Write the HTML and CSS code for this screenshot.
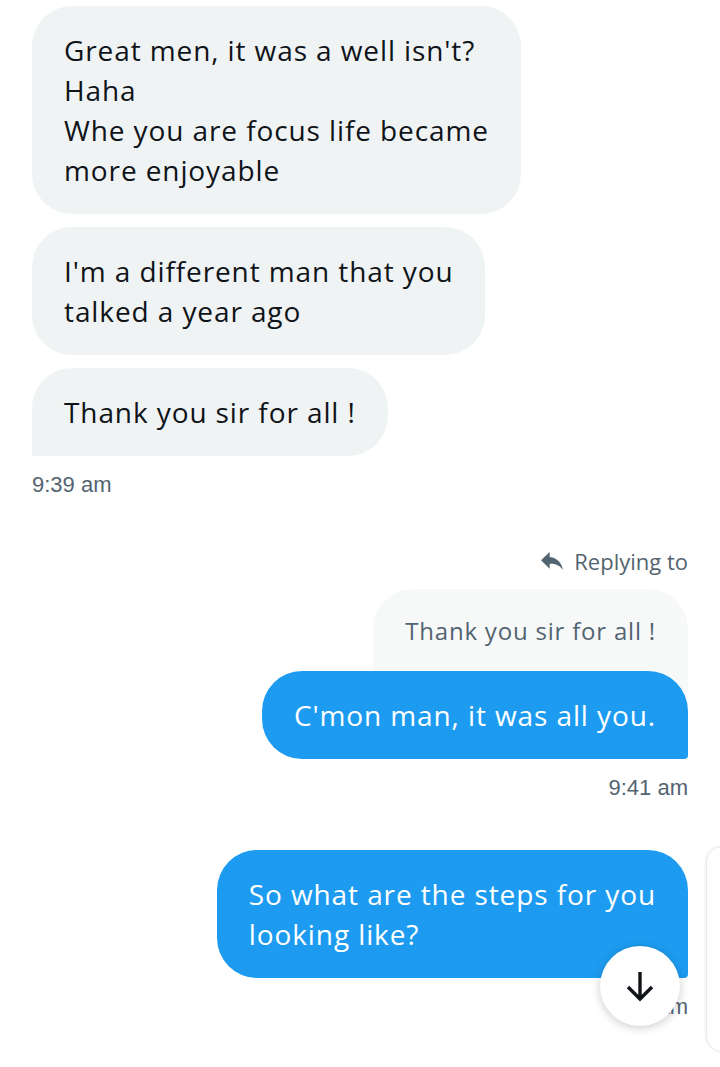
FILE: index.html
```html
<!DOCTYPE html>
<html lang="en">
<head>
    <meta charset="UTF-8">
    <meta name="viewport" content="width=device-width, initial-scale=1.0">
    <title>Messages</title>
    <link rel="stylesheet" href="styles.css">
</head>
<body>
    <div class="chat">
        <div class="group received">
            <div class="bubble">Great men, it was a well isn't?<br>Haha<br>Whe you are focus life became<br>more enjoyable</div>
            <div class="bubble">I'm a different man that you<br>talked a year ago</div>
            <div class="bubble last">Thank you sir for all !</div>
            <div class="time">9:39 am</div>
        </div>

        <div class="group sent">
            <div class="replying">
                <svg class="reply-icon" viewBox="0 0 24 24"><path d="M10 8.6V4.2L2.6 11.4l7.4 7.3v-4.3c5.2 0 8.9 1.6 11.4 5.4-1-5.3-4.2-10.4-11.4-11.2z"/></svg>
                <span>Replying to</span>
            </div>
            <div class="quote">Thank you sir for all !</div>
            <div class="bubble last quoted">C'mon man, it was all you.</div>
            <div class="time">9:41 am</div>
        </div>

        <div class="group sent">
            <div class="bubble last">So what are the steps for you<br>looking like?</div>
            <div class="time">9:42 am</div>
        </div>

        <button class="scroll-down" aria-label="Scroll to bottom">
            <svg viewBox="0 0 40 40"><path d="M20 6v27M8 21l12 12 12-12"/></svg>
        </button>
        <div class="side-panel"></div>
    </div>
</body>
</html>
```

FILE: styles.css
```css
body {
    margin: 0;
    background: #ffffff;
    color: #0f1419;
    font-family: 'Open Sans', sans-serif;
    overflow: hidden;
}
.chat {
    position: relative;
    height: 1067px;
    padding: 6px 32px 0;
    box-sizing: border-box;
}
.group {
    display: flex;
    flex-direction: column;
    gap: 13px;
}
.received {
    align-items: flex-start;
}
.sent {
    align-items: flex-end;
    gap: 0;
}
.bubble {
    font-size: 28px;
    letter-spacing: 0.9px;
    line-height: 40px;
    padding: 24px 32px;
    border-radius: 40px;
    background: #eff3f4;
}
.received .bubble.last {
    border-bottom-left-radius: 0;
}
.sent .bubble {
    background: #1d9bf0;
    color: #ffffff;
    border-bottom-right-radius: 4px;
}
.time {
    font-family: 'Liberation Sans', Arial, sans-serif;
    font-size: 22px;
    line-height: 24px;
    color: #536471;
    margin-top: 4px;
}
.sent .time {
    margin-top: 17px;
}
.replying {
    display: flex;
    align-items: center;
    gap: 8px;
    margin-top: 49px;
    font-size: 22px;
    line-height: 30px;
    color: #536471;
}
.reply-icon {
    width: 28px;
    height: 28px;
    fill: #536471;
}
.quote {
    margin-top: 13px;
    background: #f7f9f9;
    color: #536471;
    font-size: 24px;
    letter-spacing: 0.8px;
    line-height: 40px;
    padding: 22px 32px 40px;
    border-radius: 40px 40px 0 0;
}
.sent .bubble.quoted {
    position: relative;
    margin-top: -20px;
}
.sent + .sent .bubble {
    margin-top: 50px;
}
.scroll-down {
    position: absolute;
    left: 600px;
    top: 946px;
    width: 80px;
    height: 80px;
    border: none;
    border-radius: 50%;
    background: #ffffff;
    box-shadow: 0 2px 10px rgba(0, 0, 0, 0.2);
    display: flex;
    align-items: center;
    justify-content: center;
    padding: 0;
}
.scroll-down svg {
    width: 40px;
    height: 40px;
    fill: none;
    stroke: #0f1419;
    stroke-width: 3.4;
}
.side-panel {
    position: absolute;
    left: 706px;
    top: 846px;
    width: 40px;
    height: 204px;
    border: 1px solid #e6e9eb;
    border-radius: 16px;
    background: #ffffff;
    box-shadow: -1px 0 3px rgba(0, 0, 0, 0.05);
}
```
